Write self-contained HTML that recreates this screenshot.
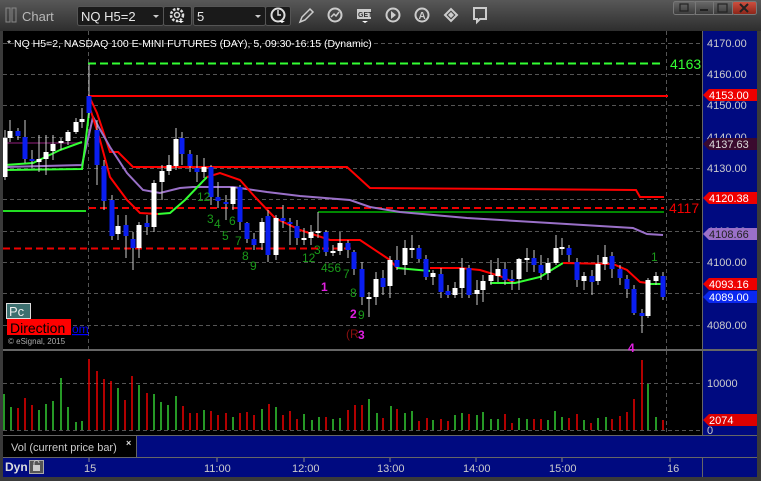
<!DOCTYPE html>
<html><head><meta charset="utf-8"><style>
html,body{margin:0;padding:0;background:#2a2a2a;}
svg{display:block;}
text{font-family:"Liberation Sans",sans-serif;}
</style></head><body>
<svg width="761" height="481" viewBox="0 0 761 481" xmlns="http://www.w3.org/2000/svg">
<defs>
<linearGradient id="tb" x1="0" y1="0" x2="0" y2="1"><stop offset="0" stop-color="#585858"/><stop offset="1" stop-color="#2e2e2e"/></linearGradient>
<linearGradient id="wb" x1="0" y1="0" x2="0" y2="1"><stop offset="0" stop-color="#6a6a6a"/><stop offset="1" stop-color="#3a3a3a"/></linearGradient>
<linearGradient id="xb" x1="0" y1="0" x2="0" y2="1"><stop offset="0" stop-color="#d05040"/><stop offset="1" stop-color="#8a2418"/></linearGradient>
</defs>
<rect x="0" y="0" width="761" height="31" fill="url(#tb)"/>
<rect x="0" y="31" width="761" height="450" fill="#3a3a3a"/>
<rect x="6" y="8" width="4" height="14" fill="none" stroke="#888" stroke-width="1"/>
<rect x="12" y="8" width="4" height="14" fill="none" stroke="#888" stroke-width="1"/>
<text x="22" y="21" font-size="13" fill="#b8b8b8">Chart</text>
<rect x="77.5" y="6.5" width="86" height="19" fill="#1a1a1a" stroke="#555" rx="2"/>
<text x="81" y="21" font-size="13" fill="#e8e8e8">NQ H5=2</text>
<path d="M153 15 l3 3 l3-3z" fill="#ccc"/>
<rect x="163.5" y="6.5" width="28" height="19" fill="#1a1a1a" stroke="#555" rx="2"/>
<circle cx="177" cy="15" r="6" fill="none" stroke="#ddd" stroke-width="2.5" stroke-dasharray="2.5 1.5"/>
<circle cx="177" cy="15" r="2.5" fill="none" stroke="#ddd" stroke-width="1.5"/>
<path d="M178 21 l3 2 l3-2z" fill="#fff"/>
<rect x="193.5" y="6.5" width="72" height="19" fill="#1a1a1a" stroke="#555" rx="2"/>
<text x="197" y="21" font-size="13" fill="#e8e8e8">5</text>
<path d="M255 15 l3 3 l3-3z" fill="#ccc"/>
<rect x="265.5" y="6.5" width="25" height="19" fill="#1a1a1a" stroke="#555" rx="2"/>
<circle cx="278" cy="15" r="6.5" fill="none" stroke="#ddd" stroke-width="2"/>
<path d="M278 10 v5 h3" stroke="#ddd" stroke-width="1.5" fill="none"/>
<path d="M279 21 l3 2 l3-2z" fill="#fff"/>
<path d="M300 22 l2-5 l8-8 l3 3 l-8 8z" fill="none" stroke="#ccc" stroke-width="1.5"/>
<circle cx="335" cy="15" r="6.5" fill="none" stroke="#ccc" stroke-width="2"/>
<path d="M331 17 l3-3 l2 2 l3-4" stroke="#ccc" stroke-width="1.5" fill="none"/>
<rect x="357" y="9" width="14" height="10" fill="#ccc"/>
<text x="358" y="17" font-size="7" fill="#333" font-weight="bold">GET</text>
<path d="M362 21 l3 2 l3-2z" fill="#fff"/>
<circle cx="393" cy="15" r="6.5" fill="none" stroke="#ccc" stroke-width="2"/>
<path d="M391 11 l5 4 l-5 4z" fill="#ccc"/>
<circle cx="422" cy="15" r="6.5" fill="none" stroke="#ccc" stroke-width="2"/>
<text x="418.5" y="19" font-size="10" fill="#ccc" font-weight="bold">A</text>
<path d="M445 15 l6-6 l6 6 l-6 6z" fill="none" stroke="#ccc" stroke-width="2"/>
<path d="M448 15 l3-3 l3 3 l-3 3z" fill="#ccc"/>
<path d="M474 8 h12 v11 h-6 l-3 3 v-3 h-3z" fill="none" stroke="#ccc" stroke-width="2"/>
<rect x="673.5" y="1.5" width="22" height="13" rx="2" fill="url(#wb)" stroke="#777"/>
<rect x="695.5" y="1.5" width="18" height="13" fill="url(#wb)" stroke="#777"/>
<rect x="713.5" y="1.5" width="19" height="13" fill="url(#wb)" stroke="#777"/>
<rect x="732.5" y="1.5" width="24" height="13" rx="2" fill="url(#xb)" stroke="#777"/>
<rect x="680" y="4" width="8" height="7" fill="none" stroke="#222" stroke-width="1.2"/>
<rect x="700" y="9" width="8" height="2" fill="#222"/>
<rect x="718" y="4" width="9" height="8" fill="none" stroke="#222" stroke-width="1.2"/>
<path d="M740 4 l8 8 M748 4 l-8 8" stroke="#222" stroke-width="2"/>

<rect x="3" y="31" width="700" height="318" fill="#000"/>
<rect x="703" y="31" width="54" height="318" fill="#000a80"/>
<rect x="3" y="349" width="754" height="2" fill="#666"/>
<rect x="3" y="351" width="700" height="84" fill="#000"/>
<rect x="703" y="351" width="54" height="84" fill="#000a80"/>
<rect x="702" y="31" width="1" height="426" fill="#666"/>
<rect x="3" y="435" width="754" height="1" fill="#666"/>
<rect x="3" y="436" width="133" height="21" fill="#000"/>
<rect x="136" y="436" width="621" height="21" fill="#000a80"/>
<rect x="136" y="436" width="1" height="21" fill="#666"/>
<text x="11" y="451" font-size="11" fill="#ccc">Vol (current price bar)</text>
<text x="126" y="446" font-size="9" fill="#ddd" font-weight="bold">×</text>
<rect x="3" y="457" width="754" height="1" fill="#666"/>
<rect x="3" y="458" width="754" height="19" fill="#000a80"/>
<rect x="702" y="457" width="1" height="20" fill="#666"/>
<text x="5" y="471" font-size="12" fill="#ddd" font-weight="bold">Dyn</text>
<rect x="29.5" y="460.5" width="14" height="13" fill="#555" stroke="#aaa"/>
<rect x="33" y="465" width="7" height="6" fill="#ccc"/>
<path d="M34 465 v-2 a2.5 2.5 0 0 1 5 0" fill="none" stroke="#ccc"/>
<g font-size="11" fill="#ccc">
<text x="84" y="472">15</text><text x="204" y="472">11:00</text><text x="292" y="472">12:00</text><text x="377" y="472">13:00</text><text x="463" y="472">14:00</text><text x="549" y="472">15:00</text><text x="667" y="472">16</text>
</g>
<g stroke="#888"><path d="M89 458v4M217 458v4M304 458v4M390 458v4M476 458v4M562 458v4M670 458v4"/></g>

<g stroke="#555" stroke-dasharray="4 3" stroke-width="1">
<path d="M3 43.5H702M3 74.5H702M3 105.5H702M3 137.5H702M3 168.5H702M3 199.5H702M3 231.5H702M3 262.5H702M3 293.5H702M3 325.5H702"/>
<path d="M3 383.5H702M3 430.5H702"/>
<path d="M88.5 31V349M666.5 31V349M666.5 351V435"/>
</g>
<g font-size="11" fill="#ccc">
<text x="707" y="47">4170.00</text><text x="707" y="78">4160.00</text><text x="707" y="109">4150.00</text><text x="707" y="141">4140.00</text><text x="707" y="172">4130.00</text><text x="707" y="203">4120.00</text><text x="707" y="235">4110.00</text><text x="707" y="266">4100.00</text><text x="707" y="329">4080.00</text>
<text x="707" y="387">10000</text><text x="707" y="434">0</text>
</g>
<path d="M703 95 l6-6 h48 v12 h-48z" fill="#e00"/><text x="709" y="99" font-size="11" fill="#fff">4153.00</text>
<path d="M703 144 l6-6 h48 v12 h-48z" fill="#3a0a2e"/><text x="709" y="148" font-size="11" fill="#ddd">4137.63</text>
<path d="M703 198 l6-6 h48 v12 h-48z" fill="#e00"/><text x="709" y="202" font-size="11" fill="#fff">4120.38</text>
<path d="M703 234 l6-6 h48 v12 h-48z" fill="#9a70c8"/><text x="709" y="238" font-size="11" fill="#222">4108.66</text>
<path d="M703 284 l6-6 h48 v12 h-48z" fill="#e00"/><text x="709" y="288" font-size="11" fill="#fff">4093.16</text>
<path d="M703 297 l6-6 h48 v12 h-48z" fill="#0a28f0"/><text x="709" y="301" font-size="11" fill="#fff">4089.00</text>
<path d="M703 420 l6-6 h48 v12 h-48z" fill="#d00"/><text x="709" y="424" font-size="11" fill="#fff">2074</text>

<text x="7" y="47" font-size="10.5" fill="#fff">* NQ H5=2, NASDAQ 100 E-MINI FUTURES (DAY), 5, 09:30-16:15 (Dynamic)</text>

<path d="M88 63.5H664" stroke="#3f3" stroke-width="2" stroke-dasharray="8 4"/>
<text x="670" y="69" font-size="14" fill="#3f3">4163</text>
<path d="M88 96H668" stroke="#f00" stroke-width="2"/>
<path d="M89 208H664" stroke="#e00" stroke-width="2" stroke-dasharray="7 4"/>
<text x="669" y="213" font-size="14" fill="#e00">4117</text>
<path d="M318 212H664" stroke="#080" stroke-width="2"/>
<path d="M3 211H86" stroke="#2d2" stroke-width="2"/>
<path d="M3 248.5H352" stroke="#e00" stroke-width="2" stroke-dasharray="7 4"/>
<path d="M5 143H82" stroke="#4a1040" stroke-width="2"/>
<path d="M89 96L97 113L110 152L118 152L133 167L347 167L370 188L636 190L640 197L664 197" stroke="#f00" stroke-width="2" fill="none"/>
<path d="M5 167L82 165L93 117L110 147L127 173L143 190L160 193L180 188L193 187L233 187L267 192L300 196L350 200L370 207L400 212L467 218L550 223L633 228L647 234L663 235" stroke="#9a70c8" stroke-width="2" fill="none"/>
<path d="M5 170L82 169L85 147L89 112" stroke="#3f3" stroke-width="2" fill="none"/>
<path d="M5 165L33 163L60 150L82 142" stroke="#3f3" stroke-width="2" fill="none"/>
<path d="M89 105L100 140L110 177L127 200L140 213L158 214" stroke="#f00" stroke-width="2" fill="none"/>
<path d="M158 214L170 213L185 200L207 177" stroke="#3f3" stroke-width="2" fill="none"/>
<path d="M207 177L220 173L240 180L255 197L275 218L300 230L330 240L360 240L390 260L397 268" stroke="#f00" stroke-width="2" fill="none"/>
<path d="M397 268L430 271" stroke="#3f3" stroke-width="2" fill="none"/>
<path d="M430 268L460 268L480 270L500 276L515 283" stroke="#f00" stroke-width="2" fill="none"/>
<path d="M490 283L515 283L540 277L563 263" stroke="#3f3" stroke-width="2" fill="none"/>
<path d="M563 263L613 264L627 270L640 282L648 283" stroke="#f00" stroke-width="2" fill="none"/>
<path d="M648 284H663" stroke="#3f3" stroke-width="2" fill="none"/>

<g stroke-width="1">
<g stroke="#ccc">
<path d="M5 130V180M10 120V142M18 128V140M25 120V163M32 150V168M39 135V172M46 135V175M53 135V160M61 138V150M68 130V145M76 118V134M82 108V128M89 64V118M97 120V185M104 160V210M112 195V240M118 215V240M126 215V258M133 232V270M139 222V258M147 215V235M154 180V232M162 165V200M169 155V175M176 128V170M182 132V165M190 150V172M197 155V182M204 158V178M211 165V205M218 182V208M226 195V220M233 187V210M240 185V230M247 222V243M254 233V250M262 218V250M268 210V262M276 215V260M283 205V228M290 218V245M297 220V245M304 228V245M311 225V245M318 212V238M326 230V256M333 245V256M340 232V255M348 240V258M354 250V275M362 262V305M369 292V317M376 272V305M383 270V295M390 256V298M397 246V270M405 240V275M412 235V258M419 245V262M426 255V280M433 270V285M441 268V298M448 285V298M455 282V298M462 258V298M469 265V298M477 280V305M483 275V302M491 260V285M498 258V282M505 262V285M512 270V290M519 258V290M527 248V272M534 250V272M541 255V280M548 258V280M556 235V265M562 238V255M569 245V262M577 258V287M584 272V290M592 270V295M598 255V285M605 245V270M612 252V278M620 265V285M627 275V298M634 285V315M642 309V333M648 278V318M656 272V285M663 272V300"/>
</g>
<g fill="#fff">
<rect x="2.5" y="138" width="5" height="39"/><rect x="7.5" y="131" width="5" height="7"/><rect x="36.5" y="159" width="5" height="3"/><rect x="43.5" y="152" width="5" height="7"/><rect x="50.5" y="144" width="5" height="7"/><rect x="58.5" y="141" width="5" height="2"/><rect x="65.5" y="132" width="5" height="9"/><rect x="73.5" y="122" width="5" height="10"/><rect x="79.5" y="119" width="5" height="3"/>
<rect x="115.5" y="226" width="5" height="8"/><rect x="136.5" y="225" width="5" height="23"/><rect x="151.5" y="183" width="5" height="44"/><rect x="159.5" y="171" width="5" height="11"/><rect x="166.5" y="165" width="5" height="6"/><rect x="173.5" y="139" width="5" height="27"/><rect x="201.5" y="167" width="5" height="5"/><rect x="230.5" y="187" width="5" height="17"/><rect x="259.5" y="222" width="5" height="21"/><rect x="273.5" y="218" width="5" height="37"/><rect x="301.5" y="238" width="5" height="2"/><rect x="308.5" y="232" width="5" height="6"/><rect x="315.5" y="231" width="5" height="2"/><rect x="330.5" y="251" width="5" height="2"/><rect x="337.5" y="243" width="5" height="8"/><rect x="366.5" y="297" width="5" height="2"/><rect x="373.5" y="279" width="5" height="18"/><rect x="387.5" y="260" width="5" height="26"/><rect x="402.5" y="248" width="5" height="17"/><rect x="409.5" y="248" width="5" height="2"/><rect x="430.5" y="273" width="5" height="4"/><rect x="452.5" y="288" width="5" height="7"/><rect x="459.5" y="268" width="5" height="20"/><rect x="474.5" y="290" width="5" height="4"/><rect x="480.5" y="281" width="5" height="9"/><rect x="488.5" y="275" width="5" height="6"/><rect x="495.5" y="269" width="5" height="7"/><rect x="516.5" y="259" width="5" height="20"/><rect x="524.5" y="258" width="5" height="2"/><rect x="545.5" y="263" width="5" height="10"/><rect x="553.5" y="248" width="5" height="15"/><rect x="559.5" y="247" width="5" height="2"/><rect x="581.5" y="276" width="5" height="5"/><rect x="595.5" y="264" width="5" height="17"/><rect x="602.5" y="257" width="5" height="7"/><rect x="645.5" y="280" width="5" height="36"/><rect x="653.5" y="276" width="5" height="5"/>
</g>
<g fill="#0a1ef0">
<rect x="15.5" y="131" width="5" height="5"/><rect x="22.5" y="137" width="5" height="22"/><rect x="29.5" y="159" width="5" height="2"/><rect x="86.5" y="96" width="5" height="17"/><rect x="94.5" y="130" width="5" height="35"/><rect x="101.5" y="166" width="5" height="35"/><rect x="109.5" y="200" width="5" height="36"/><rect x="123.5" y="225" width="5" height="11"/><rect x="130.5" y="239" width="5" height="9"/><rect x="144.5" y="223" width="5" height="4"/><rect x="179.5" y="138" width="5" height="16"/><rect x="187.5" y="154" width="5" height="12"/><rect x="194.5" y="168" width="5" height="4"/><rect x="208.5" y="167" width="5" height="30"/><rect x="215.5" y="197" width="5" height="4"/><rect x="223.5" y="202" width="5" height="2"/><rect x="237.5" y="187" width="5" height="35"/><rect x="244.5" y="223" width="5" height="16"/><rect x="251.5" y="239" width="5" height="6"/><rect x="265.5" y="216" width="5" height="39"/><rect x="280.5" y="218" width="5" height="3"/><rect x="287.5" y="222" width="5" height="2"/><rect x="294.5" y="226" width="5" height="12"/><rect x="323.5" y="232" width="5" height="20"/><rect x="345.5" y="243" width="5" height="7"/><rect x="351.5" y="252" width="5" height="17"/><rect x="359.5" y="269" width="5" height="28"/><rect x="380.5" y="278" width="5" height="9"/><rect x="394.5" y="260" width="5" height="7"/><rect x="416.5" y="248" width="5" height="11"/><rect x="423.5" y="259" width="5" height="18"/><rect x="438.5" y="274" width="5" height="18"/><rect x="445.5" y="291" width="5" height="4"/><rect x="466.5" y="268" width="5" height="27"/><rect x="502.5" y="269" width="5" height="11"/><rect x="509.5" y="279" width="5" height="2"/><rect x="531.5" y="258" width="5" height="7"/><rect x="538.5" y="265" width="5" height="8"/><rect x="566.5" y="248" width="5" height="7"/><rect x="574.5" y="262" width="5" height="18"/><rect x="589.5" y="276" width="5" height="6"/><rect x="609.5" y="256" width="5" height="13"/><rect x="617.5" y="269" width="5" height="9"/><rect x="624.5" y="279" width="5" height="10"/><rect x="631.5" y="289" width="5" height="24"/><rect x="639.5" y="313" width="5" height="3"/><rect x="660.5" y="276" width="5" height="21"/>
</g>
</g>

<g font-size="12" fill="#1a9a1a">
<text x="197" y="201">12</text><text x="207" y="223">3</text><text x="214" y="228">4</text><text x="229" y="225">6</text><text x="222" y="240">5</text><text x="235" y="245">7</text><text x="242" y="260">8</text><text x="250" y="270">9</text>
<text x="302" y="262">12</text><text x="314" y="254">3</text><text x="321" y="272">456</text><text x="343" y="278">7</text><text x="350" y="297">8</text><text x="358" y="319">9</text><text x="651" y="261">1</text>
</g>
<g font-size="12" fill="#e020e0" font-weight="bold">
<text x="321" y="291">1</text><text x="350" y="318">2</text><text x="358" y="339">3</text><text x="628" y="352">4</text>
</g>
<text x="346" y="338" font-size="12" fill="#8a1010">(R</text>

<rect x="6.5" y="303.5" width="24" height="15" fill="#3e7070" stroke="#ddd"/>
<text x="9" y="316" font-size="13" fill="#eee">Pc</text>
<rect x="7" y="319" width="64" height="16" fill="#f00"/>
<text x="10" y="333" font-size="14" fill="#000">Direction</text>
<text x="72" y="333" font-size="12" fill="#00f" text-decoration="underline">om</text>
<text x="8" y="344" font-size="8" fill="#aaa">© eSignal, 2015</text>

<g stroke-width="1.5">
<path stroke="#3c3" d="M4 394V430M11 407V430M39 410V430M46 404V430M53 401V430M61 378V430M68 407V430M76 422V430M82 421V430M118 388V430M139 385V430M154 394V430M161 402V430M168 405V430M176 396V430M204 410V430M233 417V430M262 409V430M276 407V430M304 414V430M312 420V430M319 417V430M333 419V430M340 418V430M369 399V430M377 413V430M391 406V430M405 413V430M412 411V430M433 420V430M455 415V430M462 413V430M477 415V430M483 412V430M491 419V430M498 419V430M519 418V430M527 419V430M548 420V430M555 411V430M562 417V430M584 420V430M598 418V430M606 417V430M648 384V430M656 417V430"/>
<path stroke="#e00" d="M18 408V430M25 398V430M32 405V430M89 359V430M97 371V430M104 379V430M111 381V430M125 400V430M132 376V430M147 393V430M183 406V430M190 413V430M197 413V430M211 411V430M218 415V430M226 413V430M240 413V430M247 412V430M254 415V430M269 404V430M283 415V430M290 411V430M297 419V430M326 417V430M348 410V430M355 405V430M362 405V430M383 418V430M397 409V430M419 421V430M427 418V430M441 419V430M448 421V430M469 414V430M505 414V430M512 423V430M534 419V430M541 419V430M569 418V430M577 414V430M591 423V430M612 419V430M620 416V430M627 412V430M634 399V430M642 360V430M663 420V430"/>
</g>
<rect x="0" y="31" width="3" height="450" fill="#3a3a3a"/>
<rect x="757" y="31" width="4" height="450" fill="#3a3a3a"/>
<rect x="0" y="477" width="761" height="4" fill="#3a3a3a"/>
</svg>
</body></html>
